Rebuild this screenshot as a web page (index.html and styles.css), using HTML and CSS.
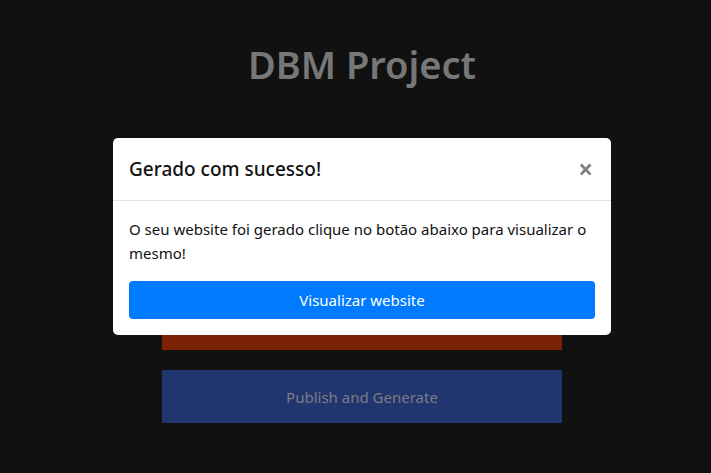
FILE: index.html
```html
<!DOCTYPE html>
<html lang="pt">
<head>
<meta charset="utf-8">
<title>DBM Project</title>
<link rel="stylesheet" href="styles.css">
</head>
<body>
<main class="page">
  <h1 class="title">DBM Project</h1>
  <div class="stack">
    <div class="bar bar-red"></div>
    <div class="bar bar-blue">Publish and Generate</div>
  </div>
</main>
<div class="overlay">
  <div class="modal">
    <div class="modal-header">
      <h5 class="modal-title">Gerado com sucesso!</h5>
      <button class="close" type="button" aria-label="Close">×</button>
    </div>
    <div class="modal-body">
      <p class="modal-text">O seu website foi gerado clique no botão abaixo para visualizar o mesmo!</p>
      <button class="btn-primary" type="button">Visualizar website</button>
    </div>
  </div>
</div>
</body>
</html>
```

FILE: styles.css
```css
* { box-sizing: border-box; }
html, body { margin: 0; height: 100%; }
body {
  background: #111111;
  font-family: "Noto Sans", "Open Sans", sans-serif;
  font-size: 16px;
  line-height: 1.5;
  color: #212529;
  overflow: hidden;
}
.page {
  padding-left: 13px;
  padding-top: 40px;
  display: flex;
  flex-direction: column;
  align-items: center;
}
.title {
  margin: 0;
  font-size: 38px;
  font-weight: 600;
  line-height: 48px;
  color: #777777;
}
.stack {
  margin-top: 209px;
  width: 400px;
  display: flex;
  flex-direction: column;
  gap: 20px;
}
.bar {
  height: 53px;
  display: flex;
  align-items: center;
  justify-content: center;
}
.bar-red { background: #7c2204; }
.bar-blue {
  background: #21356f;
  color: #7a7d86;
  font-size: 15px;
  padding-top: 2px;
}
.overlay {
  position: fixed;
  inset: 0;
  padding-left: 13px;
  display: flex;
  align-items: center;
  justify-content: center;
}
.modal {
  width: 498px;
  background: #ffffff;
  border-radius: 5px;
}
.modal-header {
  display: flex;
  align-items: flex-start;
  justify-content: space-between;
  padding: 16px;
  border-bottom: 1px solid #dee2e6;
}
.modal-title {
  margin: 0;
  font-size: 19px;
  font-weight: 500;
  line-height: 30px;
  color: #111;
}
.close {
  border: 0;
  background: transparent;
  padding: 16px;
  margin: -16px -14px -16px auto;
  font-family: "Noto Sans", sans-serif;
  font-size: 26px;
  font-weight: 700;
  line-height: 30px;
  color: #000;
  opacity: 0.5;
}
.modal-body {
  padding: 16px;
}
.modal-text {
  margin: 0 0 16px;
  font-size: 15px;
  line-height: 24px;
  color: #111;
}
.btn-primary {
  display: block;
  width: 100%;
  height: 38px;
  border: 0;
  border-radius: 4px;
  background: #007bff;
  color: #ffffff;
  font-family: "Noto Sans", sans-serif;
  font-size: 15px;
}
```
